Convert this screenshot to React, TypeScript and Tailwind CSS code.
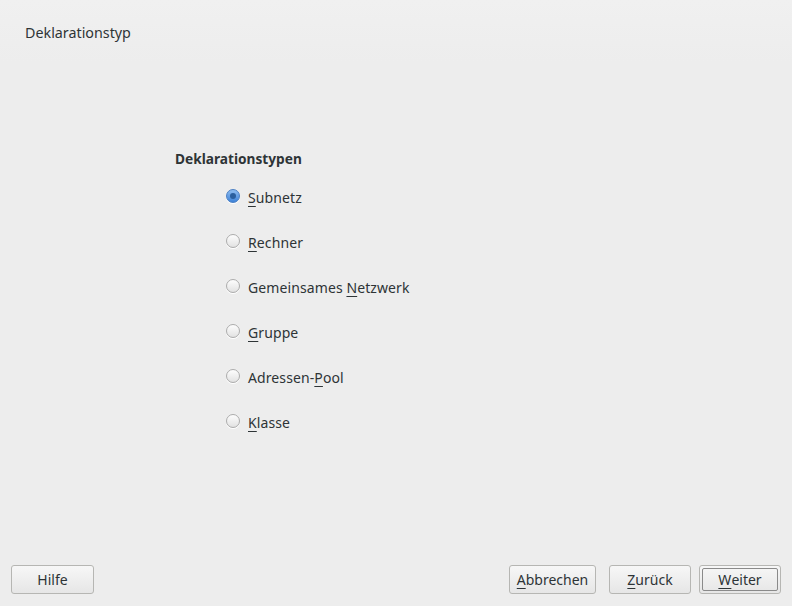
import { useState } from 'react';

const options = [
  { pre: '', key: 'S', post: 'ubnetz' },
  { pre: '', key: 'R', post: 'echner' },
  { pre: 'Gemeinsames ', key: 'N', post: 'etzwerk' },
  { pre: '', key: 'G', post: 'ruppe' },
  { pre: 'Adressen-', key: 'P', post: 'ool' },
  { pre: '', key: 'K', post: 'lasse' },
];

function Radio({ checked }: { checked: boolean }) {
  return checked ? (
    <span className="w-[14px] h-[14px] rounded-full border border-[#4a7fc4] bg-gradient-to-b from-[#8fbdf0] to-[#3d82d8] flex items-center justify-center shadow-[0_1px_0_#fff]">
      <span className="w-[6px] h-[6px] rounded-full bg-[#2b5f9e]" />
    </span>
  ) : (
    <span className="w-[14px] h-[14px] rounded-full border border-[#acacac] bg-gradient-to-b from-[#fdfdfd] to-[#e2e2e2] shadow-[0_1px_0_#fff]" />
  );
}

function Btn({ pre, k, post, focus }: { pre?: string; k?: string; post?: string; focus?: boolean }) {
  return (
    <button
      className={`w-full h-[29px] rounded-[3px] border border-[#b6b6b3] bg-gradient-to-b from-[#f7f7f7] to-[#e6e6e6] text-[14px] text-[#2e3436] flex items-center justify-center ${
        focus ? 'p-[2px]' : ''
      }`}
    >
      {focus ? (
        <span className="w-full h-full border border-[#8a8a8a] rounded-[2px] flex items-center justify-center">
          {pre}
          {k && <span className="underline underline-offset-[3px]">{k}</span>}
          {post}
        </span>
      ) : (
        <>
          {pre}
          {k && <span className="underline underline-offset-[3px]">{k}</span>}
          {post}
        </>
      )}
    </button>
  );
}

export default function App() {
  const [sel, setSel] = useState(0);
  return (
    <div
      className="w-[792px] h-[606px] bg-[#ededed] flex flex-col text-[#2e3436]"
      style={{ fontFamily: '"Noto Sans", "Open Sans", sans-serif' }}
    >
      <div className="h-[64px] px-[25px] pt-[22px] text-[14.3px] bg-gradient-to-b from-[#f0f0f0] to-[#ededed]">
        Deklarationstyp
      </div>
      <div className="flex-1 pl-[175px] pt-[85px]">
        <div className="text-[13.7px] font-bold leading-[20px]">Deklarationstypen</div>
        <div className="flex flex-col gap-[25px] pl-[51px] pt-[17px]">
          {options.map((o, i) => (
            <label key={i} className="flex items-center gap-[8px] h-[20px] text-[14px] cursor-default" onClick={() => setSel(i)}>
              <Radio checked={sel === i} />
              <span className="mt-[3px] tracking-[0.1px]">
                {o.pre}
                <span className="underline underline-offset-[3px]">{o.key}</span>
                {o.post}
              </span>
            </label>
          ))}
        </div>
      </div>
      <div className="h-[41px] px-[11px] pb-[13px] flex items-start">
        <div className="w-[83px]">
          <Btn pre="Hilfe" />
        </div>
        <div className="flex-1" />
        <div className="w-[87px]">
          <Btn k="A" post="bbrechen" />
        </div>
        <div className="w-[82px] ml-[13px]">
          <Btn k="Z" post="urück" />
        </div>
        <div className="w-[82px] ml-[8px]">
          <Btn k="W" post="eiter" focus />
        </div>
      </div>
    </div>
  );
}
